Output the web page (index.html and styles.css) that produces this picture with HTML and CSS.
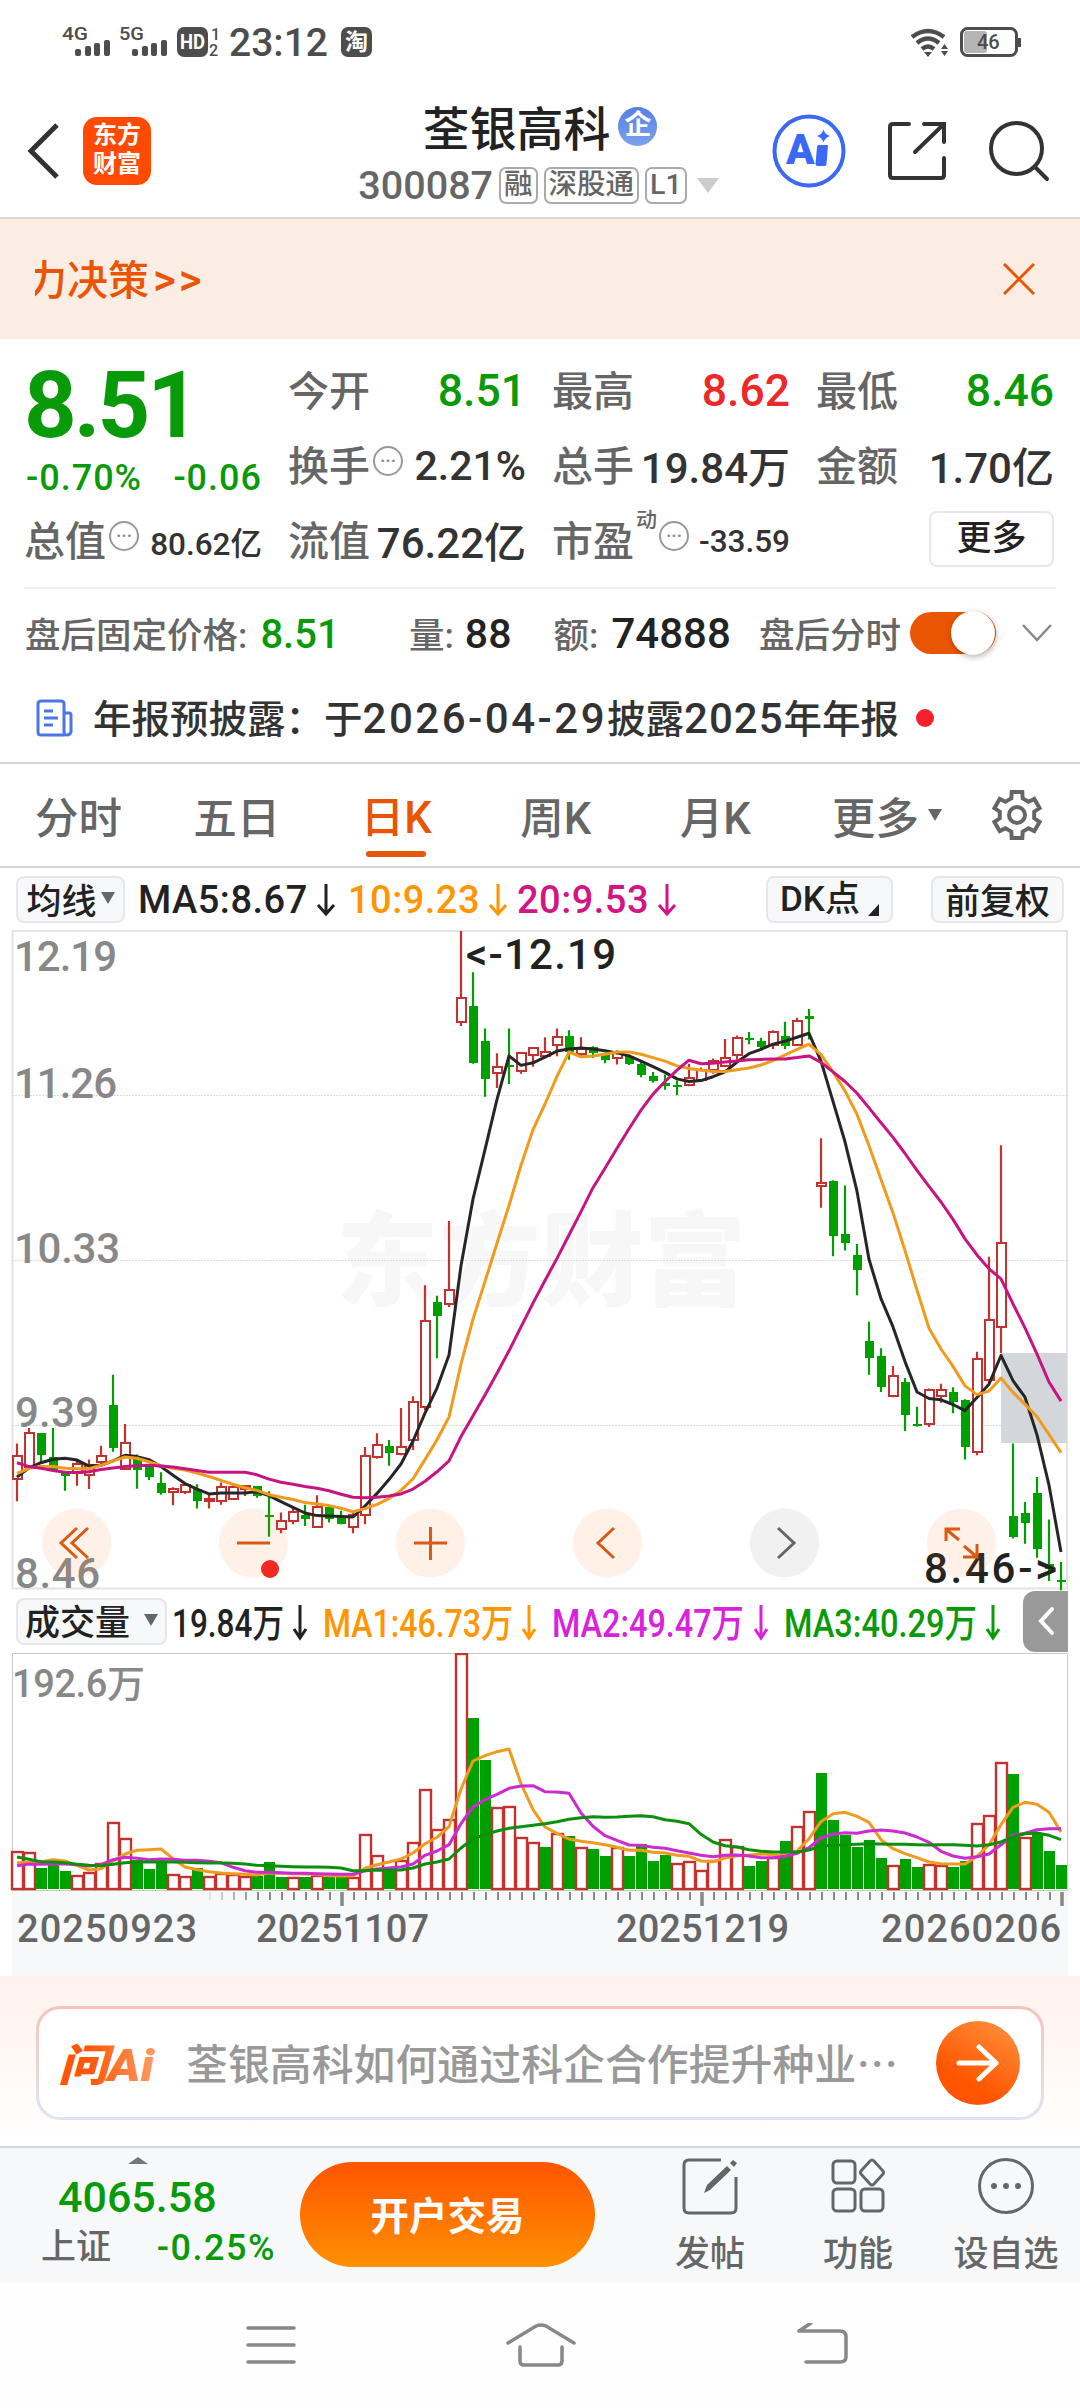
FILE: index.html
```html
<!DOCTYPE html>
<html lang="zh-CN">
<head>
  <meta charset="UTF-8">
  <meta name="viewport" content="width=device-width, initial-scale=1.0">
  <title>荃银高科 300087</title>
  <link rel="stylesheet" href="styles.css">
</head>
<body>
  <div class="status-bar">
    <svg class="status-left" width="390" height="90" viewBox="0 0 390 90">
      <g fill="#4d4d4d">
        <text x="62" y="40" class="net" textLength="26" lengthAdjust="spacingAndGlyphs">4G</text>
        <rect x="75" y="49" width="6" height="7" rx="2"/><rect x="85" y="46" width="6" height="10" rx="2"/><rect x="94" y="43" width="6" height="13" rx="2"/><rect x="104" y="40" width="6" height="16" rx="2"/>
        <text x="119" y="40" class="net" textLength="25" lengthAdjust="spacingAndGlyphs">5G</text>
        <rect x="132" y="49" width="6" height="7" rx="2"/><rect x="142" y="46" width="6" height="10" rx="2"/><rect x="151" y="43" width="6" height="13" rx="2"/><rect x="161" y="40" width="6" height="16" rx="2"/>
        <rect x="177" y="27" width="31" height="30" rx="7"/>
        <text x="211" y="40" class="sim">1</text>
        <text x="209" y="56" class="sim">2</text>
        <text x="229" y="56" class="clock" textLength="99">23:12</text>
        <rect x="341" y="27" width="31" height="30" rx="7"/>
      </g>
      <text x="180" y="49" class="hd" textLength="25" lengthAdjust="spacingAndGlyphs">HD</text>
      <text x="345" y="50" class="tao">淘</text>
    </svg>
    <svg width="170" height="90" viewBox="0 0 170 90">
      <g fill="none" stroke="#4d4d4d" stroke-width="4.5">
        <path d="M2 37q16-12 32 0M7 43q11-9 22 0M12 49q6-5 12 0"/>
        <rect x="51.500" y="28.500" width="55" height="27" rx="6" stroke-width="3"/>
      </g>
      <path d="M14 52h8l-4 5zM31 49l3.500-5 3.500 5zM31 51l3.500 5 3.500-5zM108 38h3v9h-3z" fill="#4d4d4d"/>
      <rect x="54" y="31" width="23" height="22" rx="3" fill="#b5b5b5"/>
      <text x="67" y="49" class="battery">46</text>
    </svg>
  </div>

  <div class="header">
    <div class="header-left">
      <svg width="34" height="60" viewBox="0 0 34 60"><path d="M30 4L4 30l26 26" fill="none" stroke="#333" stroke-width="5"/></svg>
      <div class="logo">东方<br>财富</div>
    </div>
    <div class="title">
      <div class="name">荃银高科<span class="ent">企</span></div>
      <div class="code">300087<span class="tag">融</span><span class="tag">深股通</span><span class="tag">L1</span><i class="tri"></i></div>
    </div>
    <div class="header-right">
      <svg width="74" height="74" viewBox="0 0 74 74">
        <circle cx="37" cy="37" r="34.500" fill="none" stroke="#3b69f6" stroke-width="4"/>
        <text x="14" y="50" class="ai">A</text>
        <path d="M47 31h9l-1.500 19q0 2-2 2h-7q-2 0-2-2l1.500-17q0-2 2-2zM51.500 15.500q1.500 5 6.500 6.500-5 1.500-6.500 6.500-1.500-5-6.500-6.500 5-1.500 6.500-6.500z" fill="#3b69f6"/>
      </svg>
      <svg width="60" height="60" viewBox="0 0 60 60" fill="none" stroke="#333" stroke-width="4" stroke-linecap="round"><path d="M22 3H6q-3 0-3 3v48q0 3 3 3h48q3 0 3-3V37M37 3h20v18M57 3L28 31"/></svg>
      <svg width="62" height="62" viewBox="0 0 62 62" fill="none" stroke="#333" stroke-width="4" stroke-linecap="round"><circle cx="28.500" cy="28.500" r="25.500"/><path d="M47 47l12 12"/></svg>
    </div>
  </div>

  <div class="banner">
    <p>力决策<span class="go-on">&gt;&gt;</span></p>
    <svg width="32" height="32" viewBox="0 0 32 32"><path d="M1 1l30 30M31 1L1 31" stroke="#ea5504" stroke-width="3"/></svg>
  </div>

  <div class="quote">
    <div class="last">
      <div class="price">8.51</div>
      <div class="change"><span>-0.70%</span><span>-0.06</span></div>
    </div>
    <div class="cell"><label>今开</label><b class="down">8.51</b></div>
    <div class="cell"><label>最高</label><b class="up">8.62</b></div>
    <div class="cell"><label>最低</label><b class="down">8.46</b></div>
    <div class="cell"><label>换手<i class="dots">•••</i></label><b class="mid">2.21%</b></div>
    <div class="cell"><label>总手</label><b>19.84万</b></div>
    <div class="cell"><label>金额</label><b>1.70亿</b></div>
    <div class="cell"><label>总值<i class="dots">•••</i></label><b class="small">80.62亿</b></div>
    <div class="cell"><label>流值</label><b>76.22亿</b></div>
    <div class="cell"><label>市盈<sup>动</sup><i class="dots">•••</i></label><b class="small">-33.59</b></div>
    <div class="cell more-cell"><button class="more">更多</button></div>
  </div>

  <div class="after">
    <div class="after-price">盘后固定价格:<b class="down">8.51</b></div>
    <div class="after-vol">量:<b>88</b></div>
    <div class="after-amt">额:<b>74888</b></div>
    <div class="after-switch">盘后分时<span class="toggle"></span></div>
    <svg width="30" height="18" viewBox="0 0 30 18"><path d="M1 1l14 15L29 1" fill="none" stroke="#888" stroke-width="2.500"/></svg>
  </div>

  <div class="news">
    <svg width="38" height="38" viewBox="0 0 38 38" fill="none" stroke="#4a76e8" stroke-width="3"><path d="M29 36H5q-3 0-3-3V5q0-3 3-3h20q3 0 3 3v28q0 3 3 3t4-3V16q0-2-2-2h-5M8 12h9M8 19h14M8 26h9"/></svg>
    <span class="news-text">年报预披露：于<span class="date">2026-04-29</span>披露<span class="year">2025</span>年年报</span>
    <span class="dot"></span>
  </div>

  <div class="tabs">
    <span>分时</span>
    <span>五日</span>
    <span class="active">日K</span>
    <span>周K</span>
    <span>月K</span>
    <span class="tab-more">更多<i class="tri"></i></span>
    <svg width="54" height="54" viewBox="0 0 54 54" fill="none" stroke="#666" stroke-width="4"><path d="M32.300 4L32.700 10.400 38.500 13.800 44.300 10.900 49.600 20.100 44.200 23.700V30.300L49.600 33.900 44.300 43.100 38.500 40.200 32.700 43.600 32.300 50H21.700L21.300 43.600 15.500 40.200 9.700 43.100 4.400 33.900 9.800 30.300V23.700L4.400 20.100 9.700 10.900 15.500 13.800 21.300 10.400 21.700 4z"/><circle cx="27" cy="27" r="8"/></svg>
  </div>

  <div class="ma-row">
    <button class="chip">均线<i class="tri"></i></button>
    <span class="ma ma5">MA5:8.67<svg class="arrow" viewBox="0 0 20 32"><path d="M10 0v30M2 21l8 9 8-9"/></svg></span>
    <span class="ma ma10">10:9.23<svg class="arrow" viewBox="0 0 20 32"><path d="M10 0v30M2 21l8 9 8-9"/></svg></span>
    <span class="ma ma20">20:9.53<svg class="arrow" viewBox="0 0 20 32"><path d="M10 0v30M2 21l8 9 8-9"/></svg></span>
    <button class="chip dk">DK点<i class="corner"></i></button>
    <button class="chip fq">前复权</button>
  </div>

  <svg class="kline" width="1080" height="658" viewBox="0 0 1080 658">
    <text x="336" y="0" class="watermark" dy="367" textLength="410">东方财富</text>
    <path d="M12.500 0H1067V657.500H12.500z" fill="none" stroke="#e3e3e5" stroke-width="2"/>
    <path d="M12 164.500H1067M12 329.500H1067M12 494.500H1067" stroke="#dcdcdc" stroke-dasharray="2 1"/>
    <rect x="1001" y="422" width="66" height="90" fill="#d3d6db"/>
    <g class="axis">
      <text x="14" y="40" textLength="103">12.19</text>
      <text x="14" y="167" textLength="103">11.26</text>
      <text x="14" y="332" textLength="106">10.33</text>
      <text x="15" y="496" textLength="84">9.39</text>
      <text x="15" y="657" textLength="85">8.46</text>
    </g>
    <g id="candles"></g>
    <g class="mark">
      <text x="466" y="38" textLength="150">&lt;-12.19</text>
      <text x="924" y="652" textLength="133">8.46-&gt;</text>
    </g>
    <g fill="#ff6a1a" fill-opacity=".1">
      <circle cx="76.500" cy="612" r="34.500"/><circle cx="253.500" cy="612" r="34.500"/><circle cx="430.500" cy="612" r="34.500"/><circle cx="607.500" cy="612" r="34.500"/><circle cx="961.500" cy="612" r="34.500"/>
      <circle cx="784.500" cy="612" r="34.500" fill="#777"/>
    </g>
    <g fill="none" stroke="#d95a12" stroke-width="3">
      <path d="M77 597L61 612l16 15M88 597L72 612l16 15"/>
      <path d="M237 612h33M414 612h33M430.500 596v33"/>
      <path d="M614 597l-16 15 16 15"/>
      <path d="M778 597l16 15-16 15" stroke="#666"/>
      <path d="M946 610v-12h14M947 599l12 10M964 615l13 11M977 613v13h-14"/>
    </g>
    <circle cx="270" cy="638" r="9" fill="#f02a22"/>
  </svg>

  <div class="vol-row">
    <button class="chip">成交量<i class="tri"></i></button>
    <svg width="850" height="64" viewBox="173 0 850 64">
      <g class="legend">
        <text x="172" y="48" textLength="112" lengthAdjust="spacingAndGlyphs" fill="#222">19.84万</text>
        <text x="323" y="48" textLength="190" lengthAdjust="spacingAndGlyphs" fill="#ff9500">MA1:46.73万</text>
        <text x="552" y="48" textLength="192" lengthAdjust="spacingAndGlyphs" fill="#d822dc">MA2:49.47万</text>
        <text x="784" y="48" textLength="193" lengthAdjust="spacingAndGlyphs" fill="#089a08">MA3:40.29万</text>
      </g>
      <g fill="none" stroke-width="3">
        <path d="M300 16v32M294 40l6 9 6-9" stroke="#222"/>
        <path d="M529 16v32M523 40l6 9 6-9" stroke="#ff9500"/>
        <path d="M761 16v32M755 40l6 9 6-9" stroke="#d822dc"/>
        <path d="M993 16v32M987 40l6 9 6-9" stroke="#089a08"/>
      </g>
    </svg>
    <div class="fold"><svg width="18" height="30" viewBox="0 0 18 30"><path d="M15 3L4 15l11 12" fill="none" stroke="#fff" stroke-width="4" stroke-linecap="round"/></svg></div>
  </div>

  <svg class="volume" width="1080" height="323" viewBox="0 0 1080 323">
    <rect x="12" y="238" width="1056" height="85" fill="#f7f8fa"/>
    <path d="M12.500 .5H1067.500V237.500H12.500z" fill="none" stroke="#c8c8c8"/>
    <text x="12" y="44" class="vol-max" textLength="133">192.6万</text>
    <g id="bars"></g>
    <g id="ticks" stroke="#888" stroke-width="2"></g>
    <g class="dates">
      <text x="17" y="289" textLength="180">20250923</text>
      <text x="256" y="289" textLength="173">20251107</text>
      <text x="616" y="289" textLength="173">20251219</text>
      <text x="881" y="289" textLength="180">20260206</text>
    </g>
  </svg>

  <div class="ask">
    <div class="ask-box">
      <svg class="ask-mark" width="100" height="46" viewBox="0 0 100 46">
        <defs><linearGradient id="askFill" x1="0" x2="1"><stop offset=".3" stop-color="#fb5607"/><stop offset="1" stop-color="#ff9a62"/></linearGradient></defs>
        <text x="0" y="41" class="ask-logo" textLength="96" lengthAdjust="spacingAndGlyphs" fill="url(#askFill)">问Ai</text>
      </svg>
      <p>荃银高科如何通过科企合作提升种业<span>⋯</span></p>
      <div class="go"><svg width="44" height="38" viewBox="0 0 44 38"><path d="M3 19h37M23 3l17 16-17 16" fill="none" stroke="#fff" stroke-width="5" stroke-linecap="round" stroke-linejoin="round"/></svg></div>
    </div>
  </div>

  <div class="bottom">
    <div class="index">
      <i class="caret"></i>
      <div class="index-value">4065.58</div>
      <div class="index-name">上证<span>-0.25%</span></div>
    </div>
    <button class="trade">开户交易</button>
    <div class="tool tool-post">
      <svg width="58" height="58" viewBox="0 0 58 58" fill="none" stroke="#666" stroke-width="3"><path d="M40 3H8Q3 3 3 8v43q0 5 5 5h42q5 0 5-5V20"/><path d="M23 36l3-8L46 9l4 4-21 20zM49 6l3-3 4 3-3 4z" fill="#666" stroke="none"/></svg>
      <span>发帖</span>
    </div>
    <div class="tool tool-fn">
      <svg width="58" height="58" viewBox="0 0 58 58" fill="none" stroke="#666" stroke-width="3"><rect x="4" y="4" width="22" height="22" rx="4"/><rect x="4" y="32" width="22" height="22" rx="4"/><rect x="32" y="32" width="22" height="22" rx="4"/><path d="M41 4q2-2 4 0l9 10q1 2 0 3l-9 10q-2 2-4 0l-9-10q-1-2 0-3z"/></svg>
      <span>功能</span>
    </div>
    <div class="tool tool-add">
      <svg width="58" height="58" viewBox="0 0 58 58"><circle cx="29" cy="29" r="26.500" fill="none" stroke="#666" stroke-width="3"/><g fill="#666"><circle cx="17" cy="29" r="3"/><circle cx="29" cy="29" r="3"/><circle cx="41" cy="29" r="3"/></g></svg>
      <span>设自选</span>
    </div>
  </div>

  <div class="nav">
    <svg width="52" height="44" viewBox="0 0 52 44"><path d="M3 5h46M3 22h46M3 39h46"/></svg>
    <svg class="home" width="70" height="44" viewBox="0 0 70 44"><path d="M2 20L30 3q5-2 10 0l28 17M14 24v14q0 4 4 4h34q4 0 4-4V24"/></svg>
    <svg width="52" height="44" viewBox="0 0 52 44"><path d="M2 8h41q6 0 6 6v20q0 5-6 5H9M14 0L2 8"/></svg>
  </div>

  <script src="chart.js"></script>
</body>
</html>
```
FILE: styles.css
```css
* {
  box-sizing: border-box;
}

body {
  margin: 0;
  width: 1080px;
  background: #fff;
  color: #333;
  font-family: Roboto, "Noto Sans CJK SC", sans-serif;
  font-weight: 500;
}

svg {
  display: block;
  flex: none;
}

button {
  font: inherit;
  color: inherit;
  padding: 0;
  border: none;
}

p {
  margin: 0;
}

.tri {
  width: 0;
  height: 0;
  border: 7px solid transparent;
  border-top: 12px solid #666;
  border-bottom: 0;
}

.down {
  color: #089a08 !important;
}

.up {
  color: #ec2828 !important;
}

/* status bar */
.status-bar {
  display: flex;
  justify-content: space-between;
  height: 90px;
}

.net { font-size: 18px; }
.sim { font-size: 16px; }
.clock { font-size: 39px; }
.hd { font-size: 20px; font-weight: 700; fill: #fff; }
.tao { font-size: 23px; font-weight: 700; fill: #fff; }
.battery { font-size: 20px; fill: #4d4d4d; }

/* header */
.header {
  display: grid;
  grid-template-columns: 1fr auto 1fr;
  align-items: center;
  height: 129px;
  border-bottom: 2px solid #d8d8da;
}

.header-left {
  display: flex;
  align-items: center;
  gap: 22px;
  padding: 0 0 5px 27px;
}

.header-right {
  display: flex;
  align-items: center;
  justify-content: flex-end;
  gap: 41px;
  padding: 0 30px 5px 0;
}

.logo {
  width: 68px;
  height: 68px;
  padding-top: 4px;
  border-radius: 14px;
  background: #ff4a00;
  color: #fff;
  font-size: 24px;
  font-weight: 700;
  line-height: 29px;
  text-align: center;
}

.name {
  display: flex;
  align-items: center;
  justify-content: center;
  gap: 8px;
  height: 52px;
  margin-top: 4px;
  color: #222;
  font-size: 47px;
}

.ent {
  width: 39px;
  height: 39px;
  margin-top: 3px;
  border-radius: 50%;
  background: linear-gradient(#5580e6, #7aa2ec);
  color: #fff;
  font-size: 27px;
  font-weight: 700;
  line-height: 36px;
  text-align: center;
}

.code {
  display: flex;
  align-items: center;
  gap: 6px;
  height: 54px;
  margin-top: 7px;
  margin-left: -3px;
  color: #666;
  font-size: 39.500px;
}

.tag {
  height: 37px;
  padding: 0 3px;
  border: 2px solid #aaa;
  border-radius: 7px;
  font-size: 28.500px;
  line-height: 31px;
}

.code .tri {
  margin-left: 4px;
  border: 11px solid transparent;
  border-top: 15px solid #ccc;
  border-bottom: 0;
}

.ai {
  font-size: 42px;
  font-weight: 900;
  fill: #3b69f6;
}

/* notice */
.banner {
  display: flex;
  align-items: center;
  justify-content: space-between;
  height: 120px;
  padding: 0 45px 0 35px;
  background: #fcede4;
  color: #ea5504;
  font-size: 41px;
}

.banner p {
  overflow: hidden;
  padding-bottom: 5px;
  text-indent: -9px;
}

.go-on {
  margin-left: 4px;
  letter-spacing: 3px;
  font-size: 44px;
}

/* quote */
.quote {
  display: grid;
  grid-template-columns: repeat(4, 238px);
  grid-auto-rows: 75px;
  column-gap: 26px;
  height: 250px;
  margin: 0 24px;
  padding-top: 14px;
  border-bottom: 2px solid #eee;
}

.last {
  grid-row: span 2;
  color: #089a08;
}

.price {
  height: 98px;
  font-size: 92px;
  font-weight: 700;
  line-height: 106px;
  letter-spacing: -3px;
}

.change {
  display: flex;
  justify-content: space-between;
  padding-left: 2px;
  font-size: 36px;
  line-height: 54px;
  letter-spacing: 1px;
}

.cell {
  display: flex;
  align-items: center;
  justify-content: space-between;
  white-space: nowrap;
}

.cell label {
  display: flex;
  align-items: center;
  padding-bottom: 5px;
  color: #666;
  font-size: 41px;
}

.cell b {
  font-size: 42px;
  font-weight: 500;
}

.cell .up,
.cell .down {
  font-size: 44.500px;
}

.cell .mid {
  font-size: 41px;
}

.cell .small {
  padding-top: 1px;
  font-size: 31.500px;
}

.cell b:not(.up, .down, .mid, .small) {
  padding-bottom: 2px;
}

.dots {
  width: 30px;
  height: 30px;
  margin: -5px 0 0 3px;
  border: 2px solid #999;
  border-radius: 50%;
  color: #888;
  font: 9px/26px "DejaVu Sans", sans-serif;
  text-align: center;
}

sup {
  align-self: flex-start;
  width: 20px;
  margin-left: 2px;
  font-size: 21px;
  line-height: 24px;
}

.cell .more {
  width: 125px;
  height: 56px;
  border: 2px solid #e8e8ea;
  border-radius: 8px;
  background: #fff;
  color: #222;
  font-size: 35px;
  line-height: 48px;
}

.more-cell {
  justify-content: flex-end;
  padding-bottom: 4px;
}

/* after hours */
.after {
  display: flex;
  align-items: center;
  height: 87px;
  padding: 0 28px 0 25px;
  color: #666;
  font-size: 35.500px;
  white-space: nowrap;
}

.after b {
  margin-left: 13px;
  color: #222;
  font-size: 40px;
  font-weight: 500;
}

.after-price { width: 385px; }
.after-vol { width: 145px; }
.after-amt { width: 206px; }

.after-vol b {
  margin-left: 11px;
  font-size: 41px;
}

.after-amt b {
  font-size: 42px;
}

.after-switch {
  display: flex;
  align-items: center;
  gap: 9px;
  margin-right: 26px;
}

.toggle {
  width: 86px;
  height: 42px;
  border-radius: 21px;
  background: #ea5504;
}

.toggle::after {
  content: "";
  display: block;
  width: 44px;
  height: 44px;
  margin: -1px 0 0 41px;
  border-radius: 50%;
  background: #fff;
  box-shadow: 1px 2px 6px rgba(0, 0, 0, .3);
}

/* news */
.news {
  display: flex;
  align-items: center;
  height: 88px;
  padding: 0 0 3px 36px;
  border-bottom: 2px solid #d8d8da;
  font-size: 38.500px;
}

.news-text {
  margin: 0 17px 4px 19px;
}

.date {
  font-size: 42px;
  letter-spacing: 2.500px;
}

.year {
  font-size: 42px;
  letter-spacing: 1px;
}

.dot {
  width: 18px;
  height: 18px;
  border-radius: 50%;
  background: #f5222d;
}

/* tabs */
.tabs {
  display: flex;
  align-items: center;
  height: 104px;
  border-bottom: 2px solid #d8d8da;
  color: #666;
  font-size: 43.500px;
}

.tabs span {
  display: flex;
  align-items: center;
  justify-content: center;
  width: 159.500px;
  height: 102px;
}

.tabs span:first-child {
  width: 157px;
}

.tabs .active {
  flex-direction: column;
  justify-content: flex-end;
  gap: 5px;
  color: #ea5504;
}

.active::after {
  content: "";
  width: 60px;
  height: 6px;
  margin-bottom: 9px;
  border-radius: 3px;
  background: #e2570c;
}

.tabs .tab-more {
  gap: 9px;
  width: 184px;
  margin-right: 11px;
}

/* chips and legends */
.chip {
  display: flex;
  align-items: center;
  justify-content: center;
  height: 47px;
  padding-bottom: 3px;
  border: 2px solid #e6e7eb;
  border-radius: 8px;
  background: #f7f8fa;
  color: #222;
  font-size: 35px;
  white-space: nowrap;
}

.ma-row {
  display: flex;
  align-items: center;
  height: 63px;
  padding: 0 16px;
}

.ma-row .chip:first-child {
  gap: 4px;
  width: 109px;
  margin-right: 13px;
}

.ma {
  display: flex;
  align-items: center;
  gap: 8px;
  font-size: 38px;
  letter-spacing: .5px;
}

.ma5 { width: 210px; color: #222; }
.ma10 { width: 169px; color: #ff9500; }
.ma20 { width: 166px; color: #d31584; }

.arrow {
  width: 20px;
  height: 32px;
  fill: none;
  stroke: currentColor;
  stroke-width: 3;
}

.dk {
  width: 127px;
  margin-left: auto;
  padding-bottom: 0;
  align-items: flex-end;
  line-height: 43px;
}

.corner {
  margin: 0 0 5px 8px;
  border-left: 11px solid transparent;
  border-bottom: 12px solid #222;
}

.fq {
  width: 133px;
  margin-left: 38px;
}

/* price chart */
.kline {
  overflow: visible;
}

.watermark {
  font-size: 102px;
  font-weight: 900;
  fill: #f7f7f7;
}

.axis {
  font-size: 42px;
  fill: #888;
}

.mark {
  font-size: 42px;
  fill: #222;
}

/* volume chart */
.vol-row {
  display: flex;
  align-items: center;
  height: 64px;
  padding: 0 12px 0 16px;
}

.vol-row .chip {
  width: 151px;
  margin-right: 6px;
  gap: 14px;
}

.legend {
  font-size: 39px;
}

.fold {
  display: flex;
  align-items: center;
  justify-content: center;
  width: 45px;
  height: 61px;
  border-radius: 12px 0 0 12px;
  background: #999;
}

.vol-max {
  font-size: 38px;
  fill: #888;
}

.dates {
  font-size: 38px;
  fill: #666;
}

/* ask bar */
.ask {
  height: 170px;
  padding: 30px 36px 0;
  background: linear-gradient(#fff2ec, #fff);
}

.ask-box {
  display: flex;
  align-items: center;
  height: 114px;
  padding: 0 21px 0 19px;
  border: 3px solid transparent;
  border-radius: 24px;
  background: linear-gradient(#fff, #fff) padding-box, linear-gradient(#f7c3b9, #dce6f2) border-box;
}

.ask-box p {
  display: flex;
  flex: 1;
  margin-left: 28px;
  padding-bottom: 4px;
  color: #999;
  font-size: 41.900px;
}

.ask-mark {
  overflow: visible;
}

.ask-logo {
  font-size: 44px;
  font-weight: 900;
  font-style: italic;
}

.go {
  display: flex;
  align-items: center;
  justify-content: center;
  width: 84px;
  height: 84px;
  border-radius: 50%;
  background: linear-gradient(210deg, #ff9440, #ff5500 70%);
}

/* bottom bar */
.bottom {
  display: flex;
  height: 136px;
  border-top: 2px solid #d5d6d9;
  background: #f7f8fa;
  color: #666;
}

.index {
  width: 276px;
  padding-top: 9px;
}

.caret {
  display: block;
  width: 0;
  margin-left: 128px;
  border: 10px solid transparent;
  border-top: 0;
  border-bottom: 7px solid #777;
}

.index-value {
  margin: 6px 0 0 58px;
  color: #089a08;
  font-size: 43px;
  line-height: 54px;
}

.index-name {
  display: flex;
  align-items: center;
  justify-content: space-between;
  padding-left: 41px;
  font-size: 35px;
  line-height: 48px;
}

.index-name span {
  color: #089a08;
  font-size: 36px;
  letter-spacing: 1.500px;
}

.trade {
  width: 295px;
  height: 105px;
  margin: 14px 0 0 24px;
  padding-bottom: 4px;
  border-radius: 53px;
  background: linear-gradient(#ff5500, #ff9000);
  color: #fff;
  font-size: 38.500px;
  font-weight: 700;
}

.tool {
  display: flex;
  flex-direction: column;
  align-items: center;
  gap: 13px;
  width: 148px;
  padding-top: 9px;
  font-size: 35px;
  line-height: 54px;
}

.tool-post {
  margin-left: 41px;
}

.nav {
  display: flex;
  align-items: center;
  justify-content: space-between;
  height: 126px;
  padding: 0 231px 0 245px;
  background: #fefefe;
}

.nav svg {
  fill: none;
  stroke: #888;
  stroke-width: 3.500;
  stroke-linecap: round;
}

.nav .home {
  margin-right: 12px;
}
```
FILE: chart.js
```js
const NS = "http://www.w3.org/2000/svg";
const RED = "#c4322f";
const GREEN = "#00a000";
const X0 = 17;
const STEP = 12;

// [color, high, top, bottom, low]
const candles = [
  ["r",1207,1235,1289,1340],["r",1171,1182,1262,1262],["g",1183,1183,1234,1250],["g",1171,1238,1270,1270],
  ["g",1275,1275,1282,1316],["r",1247,1255,1276,1304],["r",1244,1257,1280,1312],["r",1212,1236,1249,1255],
  ["g",1048,1117,1218,1226],["r",1162,1206,1265,1265],["g",1232,1240,1267,1311],["g",1255,1262,1283,1291],
  ["g",1273,1298,1320,1325],["r",1308,1312,1318,1349],["r",1298,1303,1318,1323],["g",1301,1311,1340,1357],
  ["r",1325,1335,1339,1357],["r",1297,1307,1339,1348],["r",1303,1307,1334,1334],["r",1304,1304,1312,1328],
  ["g",1305,1305,1328,1332],["g",1317,1371,1377,1422],["r",1366,1386,1403,1414],["r",1355,1365,1386,1393],
  ["g",1348,1371,1382,1397],["r",1326,1353,1399,1401],["g",1353,1353,1382,1389],["g",1362,1375,1393,1393],
  ["r",1365,1372,1399,1414],["r",1215,1235,1371,1393],["r",1183,1210,1237,1242],["g",1199,1213,1229,1258],
  ["r",1125,1215,1232,1234],["r",1098,1112,1199,1222],["r",842,925,1122,1130],["g",866,881,912,1010],
  ["r",694,852,886,892],["r",25,180,235,244],["g",120,197,329,331],["g",250,279,367,407],
  ["r",307,339,352,387],["g",250,333,338,378],["r",306,306,348,354],["r",294,294,312,338],
  ["r",270,305,313,316],["r",250,269,287,314],["g",254,266,305,322],["r",270,298,308,318],
  ["g",291,293,306,318],["g",306,306,322,330],["r",300,303,318,333],["g",310,314,331,334],
  ["g",327,331,358,362],["g",350,360,370,375],["g",356,376,382,391],["g",370,380,383,404],
  ["r",331,363,381,383],["r",340,346,368,370],["r",319,325,345,354],["r",274,318,336,336],
  ["r",266,272,312,322],["g",258,271,276,286],["g",271,279,293,298],["r",254,257,287,297],
  ["g",234,267,291,297],["r",225,233,287,290],["g",205,222,228,275],["r",503,606,612,663],
  ["g",600,601,729,775],["g",612,723,745,762],["g",747,771,806,865],["g",926,971,1010,1048],
  ["g",987,1004,1076,1088],["r",1028,1051,1098,1100],["g",1056,1065,1140,1178],["g",1122,1162,1166,1168],
  ["r",1080,1083,1162,1169],["r",1069,1083,1098,1113],["g",1077,1087,1111,1137],["g",1105,1106,1214,1244],
  ["r",995,1011,1227,1234],["r",776,921,1060,1065],["r",519,745,938,998],["g",1207,1375,1422,1426],
  ["g",1342,1367,1389,1438],["g",1284,1322,1450,1470],["g",1382,1485,1497,1524],["g",1480,1522,1527,1545]
];

const ma5 = [1284,1263,1251,1243,1241,1245,1259,1257,1247,1234,1237,1244,1260,1280,1299,1312,1323,1321,1321,1321,1318,1327,1341,1354,1367,1373,1374,1375,1376,1351,1322,1290,1254,1201,1137,1079,1003,797,643,529,413,313,335,329,316,302,297,295,297,301,306,313,325,338,351,366,372,370,361,350,327,308,298,286,279,270,261,325,418,511,625,782,873,938,1018,1088,1103,1106,1117,1131,1101,1070,1004,1062,1100,1187,1303,1457];
const ma10 = [1276,1264,1260,1260,1264,1265,1265,1257,1247,1238,1241,1249,1258,1264,1268,1275,1283,1292,1301,1309,1315,1325,1331,1336,1343,1346,1350,1356,1364,1357,1347,1334,1315,1288,1244,1198,1146,1023,920,833,745,658,565,483,424,360,304,315,313,309,304,304,309,317,325,336,342,346,349,349,345,341,334,324,311,298,286,310,350,394,448,520,598,675,762,853,941,989,1029,1074,1094,1086,1056,1089,1116,1145,1186,1228];
const ma20 = [1251,1260,1264,1269,1273,1274,1272,1267,1263,1260,1258,1257,1259,1261,1265,1269,1273,1273,1273,1273,1279,1289,1296,1301,1306,1310,1316,1324,1331,1332,1331,1328,1323,1312,1294,1272,1247,1191,1143,1095,1045,993,938,883,831,780,726,672,617,572,526,481,438,401,372,346,323,331,330,327,325,322,321,320,320,317,313,328,350,372,399,433,467,501,538,577,614,650,690,735,772,804,827,885,940,1001,1065,1109];

const volumes = "r813 r817 g864 g857 g873 r886 r876 r850 r727 r774 g840 g867 g845 r884 r890 g864 r890 r880 r882 r889 g888 g847 g893 r893 g893 r886 g893 g893 r891 r763 r825 g873 r840 r786 r627 r747 r718 r220 g414 g541 r683 r678 r773 r787 g802 r760 g770 r802 g808 g828 r802 g830 g793 g843 g827 r850 r843 r870 r840 r777 r799 g860 g843 r831 g784 r740 r693 g580 g721 g765 g801 g782 g834 r856 g838 g861 r853 r856 g861 g845 r729 r705 r548 g584 r773 g762 g814 g857".split(" ");
const vma1 = [849,848,846,840,844,857,871,867,844,823,812,810,808,837,862,870,876,880,882,884,886,880,881,882,883,884,888,889,888,866,855,847,838,820,792,773,741,628,544,528,516,508,612,690,742,761,778,785,789,795,803,812,812,818,820,827,830,844,846,835,828,826,823,825,826,814,777,726,702,698,710,728,780,807,822,834,847,852,853,853,830,795,735,683,668,674,698,757];
const vma2 = [858,853,854,853,853,855,859,855,840,833,836,840,838,839,842,842,845,849,863,873,878,878,879,881,881,882,883,884,884,873,868,865,862,853,827,814,795,732,682,660,644,626,619,618,636,637,641,700,740,768,782,796,797,803,806,813,820,827,831,827,826,829,834,834,830,821,804,775,764,759,761,754,751,754,760,772,788,815,829,836,831,823,795,767,761,750,747,747];
const vma3 = [832,839,846,847,849,854,857,858,854,849,847,847,846,847,848,849,850,850,851,853,857,858,860,861,862,862,863,865,873,873,871,872,871,865,853,847,838,805,778,765,754,746,741,737,732,726,719,714,711,713,712,710,708,711,720,725,732,764,787,798,802,810,815,817,817,817,811,799,797,795,794,792,793,794,794,795,796,795,795,797,799,795,787,772,762,760,767,780];

function add(parent, tag, attrs) {
  const el = document.createElementNS(NS, tag);
  for (const key in attrs) el.setAttribute(key, attrs[key]);
  parent.appendChild(el);
}

const priceY = v => (v - 25) / 2.306;
const volY = v => (v - 220) / 3;

function line(parent, values, scale, color) {
  const points = values.map((v, i) => `${X0 + i * STEP},${scale(v).toFixed(1)}`).join(" ");
  add(parent, "polyline", { points, fill: "none", stroke: color, "stroke-width": 3, "stroke-linejoin": "round" });
}

const candleGroup = document.getElementById("candles");
candles.forEach(([c, high, top, bottom, low], i) => {
  const x = X0 + i * STEP;
  const y = Math.round(priceY(top));
  const h = Math.round(priceY(bottom)) - y;
  const color = c === "r" ? RED : GREEN;
  add(candleGroup, "path", { d: `M${x} ${priceY(high)}V${y}M${x} ${y + h}V${priceY(low)}`, stroke: color, "stroke-width": 2.2 });
  if (c === "r") {
    add(candleGroup, "rect", { x: x - 4, y, width: 9, height: Math.max(h, 1), fill: "#fff", stroke: color, "stroke-width": 2 });
  } else {
    add(candleGroup, "rect", { x: x - 4, y, width: 9, height: Math.max(h, 2), fill: color });
  }
});
line(candleGroup, ma5, priceY, "#262626");
line(candleGroup, ma10, priceY, "#f09b1c");
line(candleGroup, ma20, priceY, "#c81482");

const barGroup = document.getElementById("bars");
volumes.forEach((item, i) => {
  const x = X0 + i * STEP;
  const y = Math.round(volY(+item.slice(1)));
  if (item[0] === "r") {
    add(barGroup, "rect", { x: x - 5, y: y + 1, width: 11, height: 235 - y, fill: "#fff", stroke: RED, "stroke-width": 2.4 });
  } else {
    add(barGroup, "rect", { x: x - 5, y, width: 11, height: 236 - y, fill: GREEN });
  }
});
line(barGroup, vma1, volY, "#ef9c1e");
line(barGroup, vma2, volY, "#cc2bd0");
line(barGroup, vma3, volY, "#0c8f0c");

// day ticks fade in beside the first date, month ticks are taller
const tickGroup = document.getElementById("ticks");
for (let x = 210, n = 0; x <= 1062; x += 12, n++) {
  const major = x === 342 || x === 702 || x === 1062;
  add(tickGroup, "path", {
    d: `M${x} 239V${major ? 253 : 247}`,
    opacity: Math.min(1, 0.2 + n * 0.2),
    "stroke-width": major ? 3.5 : 2
  });
}
```
